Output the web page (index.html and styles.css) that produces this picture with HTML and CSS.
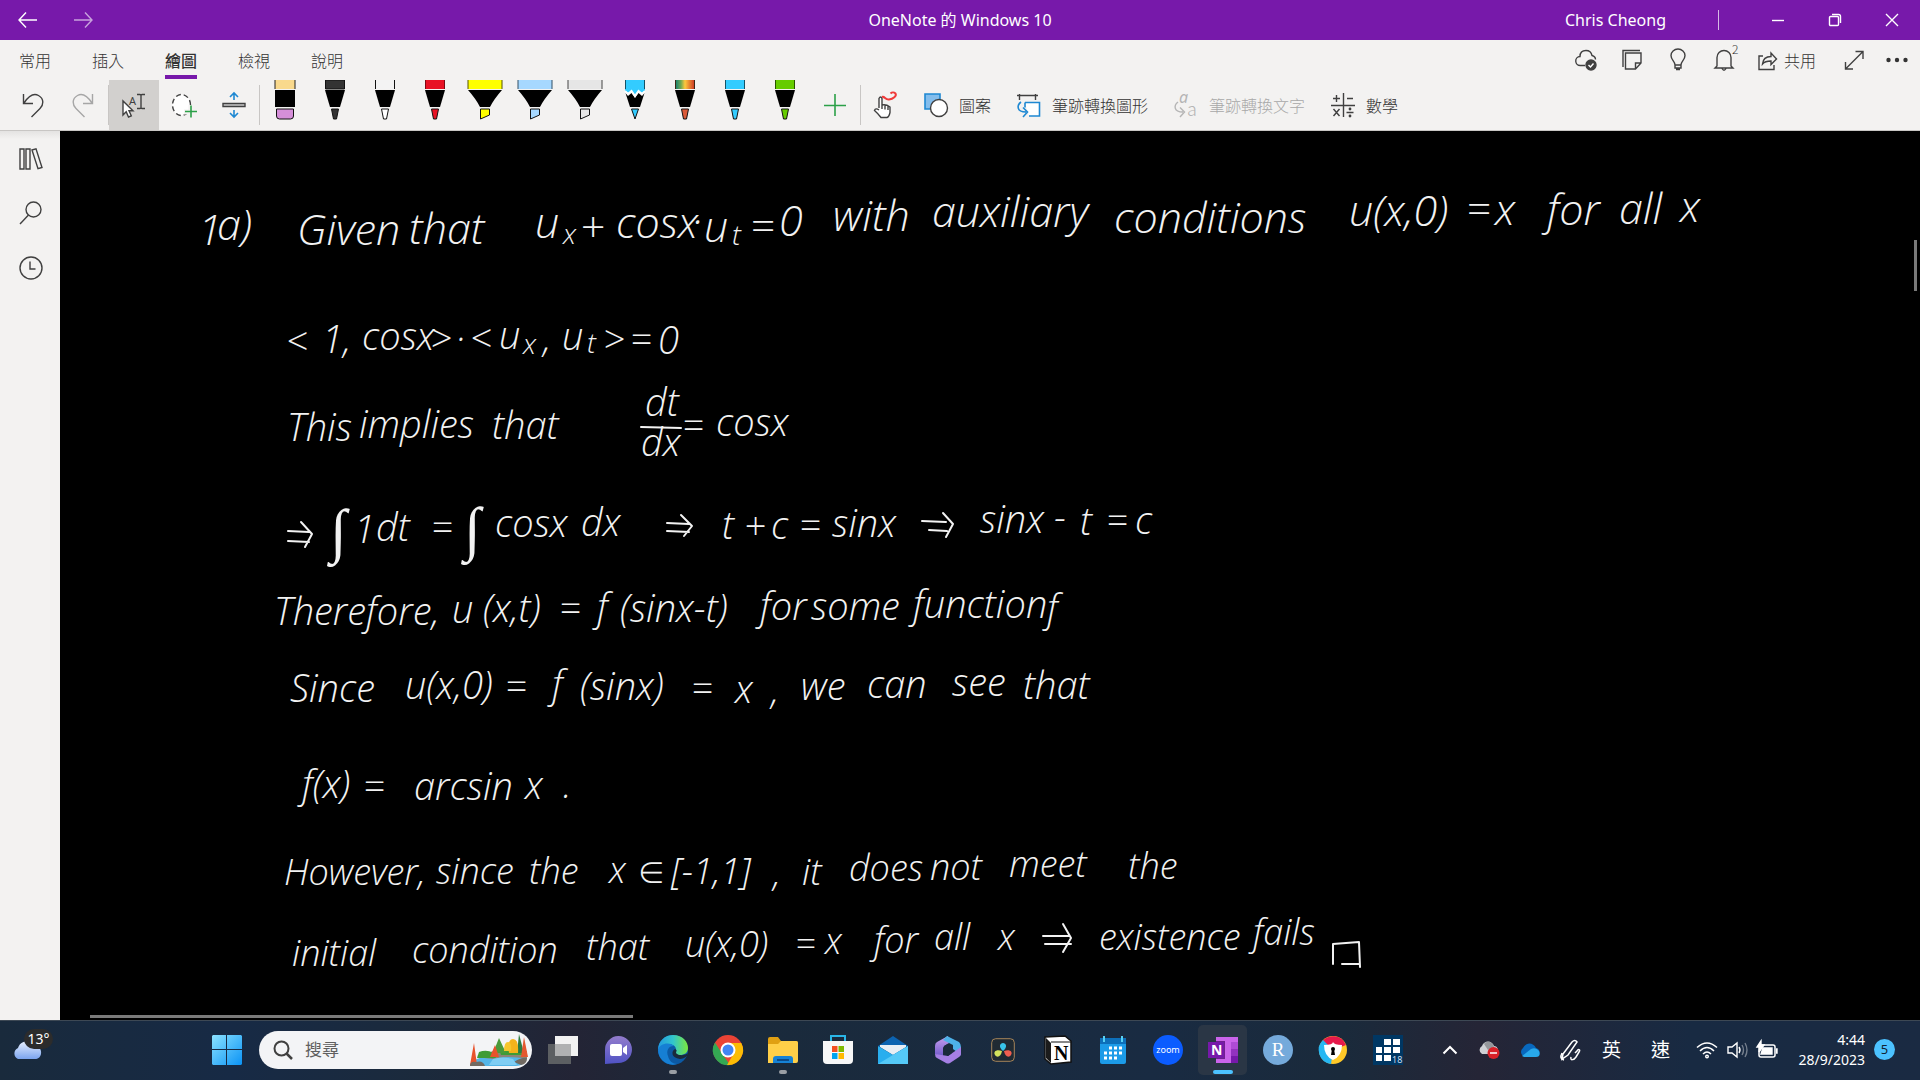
FILE: index.html
```html
<!DOCTYPE html>
<html lang="zh-Hant">
<head>
<meta charset="utf-8">
<title>OneNote 的 Windows 10</title>
<link rel="stylesheet" href="styles.css">
</head>
<body>
<header class="titlebar">
  <div class="titlebar-nav">
    <button class="bare" aria-label="返回"><svg width="20" height="18" viewBox="0 0 20 18" class="line white"><path d="M19 9H1M8 1.500L1 9l7 7.500"/></svg></button>
    <button class="bare" aria-label="前進"><svg width="20" height="18" viewBox="0 0 20 18" class="line white faded"><path d="M1 9h18M12 1.500L19 9l-7 7.500"/></svg></button>
  </div>
  <h1 class="title">OneNote 的 Windows 10</h1>
  <div class="titlebar-end">
    <span class="user">Chris Cheong</span>
    <span class="title-sep"></span>
    <button class="win" aria-label="最小化"><svg width="12" height="12" viewBox="0 0 12 12" class="line white"><path d="M0 6.500h12"/></svg></button>
    <button class="win" aria-label="還原"><svg width="12" height="12" viewBox="0 0 12 12" class="line white"><rect x=".5" y="2.500" width="9" height="9" rx="1"/><path d="M3 .5h6.500q2 0 2 2V9"/></svg></button>
    <button class="win" aria-label="關閉"><svg width="12" height="12" viewBox="0 0 12 12" class="line white"><path d="M0 0l12 12M12 0L0 12"/></svg></button>
  </div>
</header>

<nav class="tabs">
  <button class="tab">常用</button>
  <button class="tab">插入</button>
  <button class="tab active">繪圖</button>
  <button class="tab">檢視</button>
  <button class="tab">說明</button>
  <div class="tab-actions">
    <button class="bare" aria-label="同步"><svg width="24" height="24" viewBox="0 0 24 24" class="line"><path d="M11 17.500H6.500a4.500 4.500 0 0 1-.5-9C6 4 9 2.500 12 2.500c4 0 5.500 2.500 6 5 2 .5 3.500 2 3.500 4"/><circle cx="17" cy="17" r="5" class="solid"/><path d="M14.500 17l2 2 3-3.500" class="knock"/></svg></button>
    <button class="bare" aria-label="便箋"><svg width="24" height="24" viewBox="0 0 24 24" class="line"><path d="M3 19V2.500h17M5.500 5h15.500v10l-5.500 6H5.500zM21 15h-5.500v6"/></svg></button>
    <button class="bare" aria-label="操作說明"><svg width="24" height="24" viewBox="0 0 24 24" class="line"><path d="M9 17c0-4-4-5-4-9.500a7 6.500 0 0 1 14 0c0 4.500-4 5.500-4 9.500zM9 17v3h6v-3M10 21.500h4"/></svg></button>
    <button class="bare bell" aria-label="通知"><svg width="24" height="24" viewBox="0 0 24 24" class="line"><path d="M5 18V9.500a7 7 0 0 1 14 0V18l2 2H3zM10 20.500q2 3.500 4 0"/></svg><sup>2</sup></button>
    <button class="bare share"><svg width="20" height="24" viewBox="0 0 20 24" class="line"><path d="M5 8H1v13.500h15V17M4.500 16c.5-5 3.500-7.500 8.500-7.500V5l5.500 6-5.500 5.500V13c-4 0-6.500.5-8.500 3z"/></svg>共用</button>
    <button class="bare" aria-label="全螢幕"><svg width="20" height="20" viewBox="0 0 20 20" class="line"><path d="M2 18.500L18.500 2M11.500 1.500H19V9M1.500 12v7H9"/></svg></button>
    <button class="bare" aria-label="其他"><svg width="22" height="6" viewBox="0 0 22 6" fill="#333"><circle cx="2.500" cy="3" r="2.200"/><circle cx="11" cy="3" r="2.200"/><circle cx="19.500" cy="3" r="2.200"/></svg></button>
  </div>
</nav>

<div class="toolbar">
  <button class="tool" aria-label="復原"><svg width="24" height="26" viewBox="0 0 24 26" class="line"><path d="M2.500 2v9.500H12M3 11C8 3.500 13 1 17.500 3.500c6 3.500 5 9.500 1.500 13L10.500 25"/></svg></button>
  <button class="tool" aria-label="取消復原"><svg width="24" height="26" viewBox="0 0 24 26" class="line dim"><path d="M21.500 2v9.500H12M21 11C16 3.500 11 1 6.500 3.500c-6 3.500-5 9.500-1.500 13L13.500 25"/></svg></button>
  <span class="sep"></span>
  <button class="tool pressed" aria-label="選取物件或輸入文字"><svg width="26" height="26" viewBox="0 0 26 26" class="line"><path d="M2 9v14l3.200-3.200L7.500 25l2.800-1.200L8 18.800h4z" fill="#fff"/><text x="8" y="13" class="tiny">A</text><path d="M16 2.500h3q1 0 1 1 0-1 1-1h3M20 3v13M16 16.500h3q1 0 1-1 0 1 1 1h3"/></svg></button>
  <button class="tool" aria-label="套索選取"><svg width="26" height="26" viewBox="0 0 26 26" class="line"><ellipse cx="10.500" cy="13" rx="9" ry="10.500" fill="#fff" stroke-dasharray="5 3"/><path d="M13 20h14M20 13v13" stroke="#f3f2f1" stroke-width="5"/><path d="M14 19.500h12M20 13.500v12" class="green"/></svg></button>
  <button class="tool" aria-label="插入空間"><svg width="24" height="26" viewBox="0 0 24 26" class="line"><path d="M1 11.500h22v3H1z" fill="#c8c8c8"/><path d="M12 8V1.500M8 5l4-4 4 4M12 18v6.500M8 21l4 4 4-4" class="blue"/></svg></button>
  <span class="sep"></span>
  <button class="tool pen" aria-label="橡皮擦"><svg width="36" height="40" viewBox="0 0 36 40"><path d="M8 0h20v9H8z" fill="#f9d98c"/><path d="M8 0v9M28 0v9" stroke="#222"/><path d="M8 10h20v17H8z"/><path d="M9.500 29h17v7q0 3-3 3h-11q-3 0-3-3z" fill="#d58fd9" stroke="#111"/></svg></button>
  <button class="tool pen" aria-label="黑色畫筆"><svg width="36" height="40" viewBox="0 0 36 40"><path d="M8.500 0h19v9h-19z" fill="#333" stroke="#111"/><path d="M8 10h20l-5 17H13z"/><path d="M14.500 29h7l-2 10h-3z" fill="#333" stroke="#111"/></svg></button>
  <button class="tool pen" aria-label="白色畫筆"><svg width="36" height="40" viewBox="0 0 36 40"><path d="M8 0h20v9H8z" fill="#f3f3f3"/><path d="M8.500 0v9M27.500 0v9" stroke="#111"/><path d="M8 10h20l-5 17H13z"/><path d="M14.500 29h7l-2 10h-3z" fill="#fff" stroke="#111"/></svg></button>
  <button class="tool pen" aria-label="紅色畫筆"><svg width="36" height="40" viewBox="0 0 36 40"><path d="M8 0h20v9H8z" fill="#e81224"/><path d="M8.500 0v9M27.500 0v9" stroke="#7b0913"/><path d="M8 10h20l-5 17H13z"/><path d="M14.500 29h7l-2 10h-3z" fill="#e81224" stroke="#111"/></svg></button>
  <button class="tool pen" aria-label="黃色螢光筆"><svg width="36" height="40" viewBox="0 0 36 40"><path d="M1 0h34v9H1z" fill="#ff0"/><path d="M1 0v9M35 0v9" stroke="#555500"/><path d="M1 10h34q-8 9-12 17H13Q9 19 1 10z"/><path d="M13.500 29h9v6l-9 4z" fill="#ff0" stroke="#111"/></svg></button>
  <button class="tool pen" aria-label="藍色螢光筆"><svg width="36" height="40" viewBox="0 0 36 40"><path d="M1 0h34v9H1z" fill="#a6d8ff"/><path d="M1 0v9M35 0v9" stroke="#335066"/><path d="M1 10h34q-8 9-12 17H13Q9 19 1 10z"/><path d="M13.500 29h9v6l-9 4z" fill="#a6d8ff" stroke="#111"/></svg></button>
  <button class="tool pen" aria-label="灰色螢光筆"><svg width="36" height="40" viewBox="0 0 36 40"><path d="M1 0h34v9H1z" fill="#e6e6e6"/><path d="M1 0v9M35 0v9" stroke="#444"/><path d="M1 10h34q-8 9-12 17H13Q9 19 1 10z"/><path d="M13.500 29h9v6l-9 4z" fill="#e6e6e6" stroke="#111"/></svg></button>
  <button class="tool pen" aria-label="藍色鉛筆"><svg width="36" height="40" viewBox="0 0 36 40"><path d="M8 0h20v11l-3 3-3.500-3-3.500 4-3.500-4-3.500 3-3-3z" fill="#3cf"/><path d="M8.500 0v9M27.500 0v9" stroke="#145266"/><path d="M8.500 13l2.500 3 3.500-3 3.500 5 3.500-5 3.500 3 2.500-3-4.500 14H13z"/><path d="M8 11l3 3 3.500-3 3.500 5 3.500-5 3.500 3 3-3" fill="none" stroke="#fff" stroke-width="2"/><path d="M14.500 29h7L18 39z" fill="#3cf" stroke="#111"/></svg></button>
  <button class="tool pen" aria-label="彩色畫筆"><svg width="36" height="40" viewBox="0 0 36 40"><defs><linearGradient id="rainbow"><stop offset="0" stop-color="#087a70"/><stop offset=".3" stop-color="#74a952"/><stop offset=".5" stop-color="#ffc83d"/><stop offset="1" stop-color="#c92f22"/></linearGradient></defs><path d="M8 0h20v9H8z" fill="url(#rainbow)"/><path d="M8.500 0v9M27.500 0v9" stroke="#3d2515"/><path d="M8 10h20l-5 17H13z"/><path d="M14.500 29h7l-2 10h-3z" fill="#db5a38" stroke="#111"/></svg></button>
  <button class="tool pen" aria-label="天藍畫筆"><svg width="36" height="40" viewBox="0 0 36 40"><path d="M8 0h20v9H8z" fill="#3cf"/><path d="M8.500 0v9M27.500 0v9" stroke="#145266"/><path d="M8 10h20l-5 17H13z"/><path d="M14.500 29h7l-2 10h-3z" fill="#3cf" stroke="#111"/></svg></button>
  <button class="tool pen" aria-label="綠色畫筆"><svg width="36" height="40" viewBox="0 0 36 40"><path d="M8 0h20v9H8z" fill="#6c0"/><path d="M8.500 0v9M27.500 0v9" stroke="#295200"/><path d="M8 10h20l-5 17H13z"/><path d="M14.500 29h7l-2 10h-3z" fill="#6c0" stroke="#111"/></svg></button>
  <button class="tool" aria-label="新增畫筆"><svg width="22" height="22" viewBox="0 0 22 22" class="line"><path d="M0 11.500h22M11 0v22" class="green"/></svg></button>
  <span class="sep"></span>
  <button class="tool" aria-label="使用手指繪圖"><svg width="26" height="28" viewBox="0 0 26 28" class="line"><path d="M6 17V7.500q1.500-3 3 0V14q4-1 8 2v5.500q-1 4.500-3 5H8q-3-4-6.500-7 1-3 4.500-.5M9 14v4M12 14.500v4M15 15.500v3.500" fill="#fff"/><path d="M9 6c3-1 3 3 7 2.500C20 8 24 5 22.500 2.500 21 1 19 1 17.500 2.500" stroke="#f03a3a" stroke-width="2"/></svg></button>
  <button class="tool-text"><svg width="24" height="26" viewBox="0 0 24 26" class="line"><path d="M1 2h15v15H1z" fill="#83bdec" class="blue"/><circle cx="15" cy="16" r="8.500" fill="#fff"/></svg>圖案</button>
  <button class="tool-text"><svg width="24" height="26" viewBox="0 0 24 26" class="line"><path d="M2.500 2v6M18.500 2v6M0 3.500h21"/><path d="M8 10.500h14.500V24H12M8 10.500v5" class="blue" fill="#fff"/><path d="M4 10C0 13-1 20 9 20M6 15.500l4.500 4.500L6 25" class="blue"/></svg>筆跡轉換圖形</button>
  <button class="tool-text" disabled><svg width="24" height="26" viewBox="0 0 24 26" class="line pale"><text x="5" y="11" class="ital">a</text><text x="13" y="24" class="big">a</text><path d="M4 10C0 13-1 20 9 20M6 15.500l4.500 4.500L6 25"/></svg>筆跡轉換文字</button>
  <button class="tool-text"><svg width="24" height="26" viewBox="0 0 24 26" class="line"><path d="M12.500 1v24M0 13.500h24M2 6.500h7M5.500 3v7M16 6.500h6M2.500 17l6 7M8.500 17l-6 7M15.500 20.500h7"/><circle cx="19" cy="17" r=".7"/><circle cx="19" cy="24" r=".7"/></svg>數學</button>
</div>

<div class="workspace">
  <aside class="rail">
    <button class="bare" aria-label="筆記本"><svg width="24" height="22" viewBox="0 0 24 22" class="line"><path d="M1 1h4v20H1zM7 1h4v20H7zM13 2l4-1.200L23 19.500l-4 1.200z"/></svg></button>
    <button class="bare" aria-label="搜尋"><svg width="24" height="24" viewBox="0 0 24 24" class="line"><circle cx="14.500" cy="8.500" r="7.500"/><path d="M9.500 14L1 23"/></svg></button>
    <button class="bare" aria-label="最近使用"><svg width="24" height="24" viewBox="0 0 24 24" class="line"><circle cx="12" cy="12" r="11"/><path d="M11 5.500V13h5.500"/></svg></button>
  </aside>
  <main class="canvas">
    <svg class="ink" width="1860" height="889" viewBox="60 131 1860 889">
      <g class="large">
        <text x="198" y="245">1</text><text x="217" y="240">a)</text><text x="297" y="245">Given</text><text x="409" y="244">that</text>
        <text x="535" y="238">u</text><text x="563" y="244" class="sub">x</text><text x="580" y="242">+</text><text x="616" y="238">cosx</text><text x="692" y="236">·</text>
        <text x="704" y="242">u</text><text x="732" y="245" class="sub">t</text><text x="750" y="241">=</text><text x="779" y="236">0</text>
        <text x="833" y="231">with</text><text x="932" y="227">auxiliary</text><text x="1114" y="233">conditions</text>
        <text x="1349" y="226">u(x,0)</text><text x="1466" y="224">=</text><text x="1495" y="225">x</text><text x="1547" y="225">for</text><text x="1619" y="224">all</text><text x="1680" y="222">x</text>
      </g>
      <g>
        <text x="286" y="355">&lt;</text><text x="322" y="353">1,</text><text x="362" y="350">cosx</text><text x="430" y="352">&gt;</text><text x="456" y="352">·</text><text x="470" y="352">&lt;</text>
        <text x="499" y="349">u</text><text x="523" y="354" class="sub">x</text><text x="543" y="352">,</text><text x="562" y="350">u</text><text x="587" y="353" class="sub">t</text><text x="603" y="353">&gt;</text><text x="630" y="353">=</text><text x="658" y="354">0</text>
      </g>
      <g>
        <text x="287" y="441">This</text><text x="359" y="438">implies</text><text x="492" y="439">that</text>
        <text x="645" y="416">dt</text><path d="M641 427l40 1"/><text x="641" y="456">dx</text><text x="682" y="439">=</text><text x="716" y="436">cosx</text>
      </g>
      <g>
        <path d="M288 531l21 1M288 541l21 1M301 522l11 12-7 13"/><text x="330" y="551" class="integral">∫</text><text x="354" y="543">1</text><text x="376" y="541">dt</text><text x="431" y="541">=</text><text x="464" y="549" class="integral">∫</text>
        <text x="495" y="537">cosx</text><text x="581" y="536">dx</text><path d="M667 523l22 1M667 531l22 1M681 515l11 11-8 10"/>
        <text x="722" y="539">t</text><text x="744" y="540">+</text><text x="771" y="539">c</text><text x="799" y="539">=</text><text x="832" y="537">sinx</text><path d="M922 521l24 1M929 530l18 1M943 513l10 11-7 13"/>
        <text x="980" y="533">sinx</text><text x="1054" y="531">-</text><text x="1080" y="535">t</text><text x="1106" y="534">=</text><text x="1135" y="534">c</text>
      </g>
      <g>
        <text x="274" y="625">Therefore,</text><text x="452" y="623">u</text><text x="483" y="622">(x,t)</text><text x="559" y="622">=</text><text x="597" y="621">f</text><text x="620" y="622">(sinx-t)</text>
        <text x="760" y="620">for</text><text x="811" y="620">some</text><text x="913" y="618">function</text><text x="1047" y="622">f</text>
      </g>
      <g>
        <text x="290" y="702">Since</text><text x="405" y="699">u(x,0)</text><text x="505" y="700">=</text><text x="552" y="698">f</text><text x="580" y="700">(sinx)</text><text x="691" y="702">=</text><text x="735" y="703">x</text><text x="771" y="704">,</text>
        <text x="801" y="700">we</text><text x="867" y="698">can</text><text x="952" y="696">see</text><text x="1023" y="699">that</text>
      </g>
      <g>
        <text x="302" y="798">f(x)</text><text x="363" y="800">=</text><text x="414" y="800">arcsin</text><text x="525" y="799">x</text><text x="563" y="798">.</text>
      </g>
      <g class="small">
        <text x="284" y="885">However,</text><text x="436" y="884">since</text><text x="529" y="884">the</text><text x="609" y="883">x</text><text x="637" y="883" class="element">∈</text><text x="671" y="884">[-1,1]</text><text x="773" y="886">,</text><text x="802" y="885">it</text>
        <text x="849" y="881">does</text><text x="930" y="880">not</text><text x="1009" y="877">meet</text><text x="1128" y="879">the</text>
      </g>
      <g class="small">
        <text x="292" y="966">initial</text><text x="412" y="963">condition</text><text x="586" y="960">that</text><text x="685" y="957">u(x,0)</text><text x="795" y="957">=</text><text x="825" y="954">x</text><text x="874" y="953">for</text><text x="934" y="950">all</text><text x="998" y="950">x</text>
        <path d="M1043 936h26M1045 944h26M1063 924l8 14-8 14"/><text x="1099" y="950">existence</text><text x="1253" y="945">fails</text><path d="M1333 964v-20l26-2 1 25M1342 964h17"/>
      </g>
    </svg>
    <span class="scroll-x"></span>
    <span class="scroll-y"></span>
  </main>
</div>

<footer class="taskbar">
  <button class="bare weather" aria-label="天氣"><svg width="32" height="20" viewBox="0 0 32 20"><defs><linearGradient id="cloud" x2="0" y2="1"><stop offset="0" stop-color="#e6efff"/><stop offset="1" stop-color="#7ba4ee"/></linearGradient></defs><path d="M7 19a6 6 0 0 1 0-11C9 1 17-1 20 6c7-1 11 3 10 8-.5 3-3 5-6 5z" fill="url(#cloud)"/></svg><span class="temp">13°</span></button>
  <div class="apps">
    <button class="app" aria-label="開始"><svg width="30" height="30" viewBox="0 0 30 30"><defs><linearGradient id="win" gradientUnits="userSpaceOnUse" x1="0" y1="0" x2="30" y2="30"><stop offset="0" stop-color="#8be2ff"/><stop offset="1" stop-color="#0b93f5"/></linearGradient></defs><path d="M1 0h13v14H0V1zM15 0h14l1 1v13H15zM0 15h14v15H1l-1-1zM15 15h15v14l-1 1H15z" fill="url(#win)"/></svg></button>
    <label class="search"><svg width="20" height="20" viewBox="0 0 20 20" class="line"><circle cx="8.500" cy="8.500" r="7" stroke-width="2"/><path d="M13.500 13.500L19 19" stroke-width="2.500"/></svg><input type="search" placeholder="搜尋" aria-label="搜尋">
      <svg width="60" height="34" viewBox="0 0 60 34"><path d="M3 28q25-12 55-2-3 7-11 7H6z" fill="#55b6e8"/><path d="M8 23q22-9 50-5v8q-20-4-34 0-8 0-16-3z" fill="#8c8578"/><path d="M10 19q8-3 14 1l3 5H8zM30 16h24v6H32z" fill="#3f9c35"/><path d="M24 20l6-15 7 15z" fill="#4b9a3a"/><path d="M48 20l2-19 5 19z" fill="#2b7a42"/><path d="M40 20q-2-14 4-14t5 14z" fill="#f4b31b"/><path d="M35 18q0-9 4-9t3 9z" fill="#f6c62c"/><path d="M1 32l4-22 3 22zM21 24l5-12 4 12z" fill="#e8532c"/><path d="M52 24l3-20 4 20z" fill="#e4572e"/><path d="M1 33q0-5 6-4 7-2 9 4zM45 29q8-5 13-4 0 6-6 7z" fill="#716a62"/><path d="M24 26q10-3 20 0l4 6H20z" fill="#7fcdf3"/></svg></label>
    <button class="app" aria-label="工作檢視"><svg width="30" height="28" viewBox="0 0 30 28"><path d="M0 8h23v20H0z" fill="#5c5f62"/><path d="M7 0h23v20H7z" fill="#f2f2f2"/><path d="M7 8h16v12H7z" fill="#b0b1b2"/></svg></button>
    <button class="app" aria-label="聊天"><svg width="28" height="28" viewBox="0 0 28 28"><defs><linearGradient id="chat" x2="0" y2="1"><stop offset="0" stop-color="#937ccc"/><stop offset="1" stop-color="#4f52c4"/></linearGradient></defs><path d="M1 28V14a13.500 13.500 0 1 1 13 13z" fill="url(#chat)"/><rect x="6" y="8" width="12" height="12" rx="2" fill="#fff"/><path d="M19 12l4-3v10l-4-3z" fill="#fff"/></svg></button>
    <button class="app running" aria-label="Edge"><svg width="30" height="30" viewBox="0 0 30 30"><defs><linearGradient id="edge"><stop offset="0" stop-color="#2299e0"/><stop offset=".5" stop-color="#32c5cc"/><stop offset="1" stop-color="#7be83c"/></linearGradient></defs><circle cx="15" cy="15" r="15" fill="#0c59a4"/><path d="M0 15C0 6 7 0 15 0c10 0 15 7 15 13 0 5-4 7-8 7-5 0-6-2-4-4 1-5-5-8-10-6-4 1-7 3-8 5z" fill="url(#edge)"/><path d="M0 15c1-6 11-9 16-4-6 0-8 5-6 10 1 5 5 8 9 8C9 32 0 24 0 15z" fill="#167fd4"/><path d="M17 14c-4 2-4 9 5 10 2 0 5-1 7-3l1-3c-3 3-12 3-12-1 1-1 1-2-1-3z" fill="#1a2a3c"/></svg></button>
    <button class="app" aria-label="Chrome"><svg width="30" height="30" viewBox="0 0 30 30"><circle cx="15" cy="15" r="15" fill="#ea4335"/><path d="M2 7.500l7 11L17 30A15 15 0 0 1 2 7.500z" fill="#34a853"/><path d="M15 8h13.300A15 15 0 0 1 14 30l7-12z" fill="#fbbc05"/><circle cx="15" cy="15" r="7.500" fill="#fff"/><circle cx="15" cy="15" r="5.500" fill="#4285f4"/></svg></button>
    <button class="app running" aria-label="檔案總管"><svg width="30" height="26" viewBox="0 0 30 26"><path d="M0 2q0-2 2-2h8l3 4h15q2 0 2 2v8H0z" fill="#e0a013"/><path d="M0 7h10l3-3h15q2 0 2 2v18q0 2-2 2H0z" fill="#ffcf48"/><path d="M5 26v-4q0-3 3-3h14q3 0 3 3v4z" fill="#1682d5"/><path d="M9 22h12v2H9z" fill="#0b4b8a"/></svg></button>
    <button class="app" aria-label="Microsoft Store"><svg width="30" height="30" viewBox="0 0 30 30"><path d="M8 7V1h14v6" fill="none" stroke="#29b6e8" stroke-width="2"/><path d="M0 6h30v19q0 4-4 4H4q-4 0-4-4z" fill="#f7f7f7"/><path d="M9 11h5.500v6H9z" fill="#f25022"/><path d="M15.500 11H21v6h-5.500z" fill="#7fba00"/><path d="M9 18h5.500v6H9z" fill="#00a4ef"/><path d="M15.500 18H21v6h-5.500z" fill="#ffb900"/></svg></button>
    <button class="app" aria-label="郵件"><svg width="30" height="28" viewBox="0 0 30 28"><path d="M0 10L15 0l15 10-15 9z" fill="#0c63b0"/><path d="M2 9h26v2l-13 8L2 11z" fill="#e8eef4"/><path d="M0 10l15 9 15-9v18H0z" fill="#29aeee"/><path d="M0 28l30-18v18z" fill="#55c9f7"/></svg></button>
    <button class="app" aria-label="Microsoft 365"><svg width="26" height="28" viewBox="0 0 26 28"><defs><linearGradient id="m365" x2="0" y2="1"><stop offset="0" stop-color="#c9a0f0"/><stop offset="1" stop-color="#6a55c8"/></linearGradient></defs><path d="M13 0L2 6q-2 1-2 4v8l8 4V12q0-2 6-5z" fill="url(#m365)"/><path d="M12 0l12 6q2 2 2 5v8l-8-6V9L8 4z" fill="#4db1e8"/><path d="M0 18l13 2 13-9v7q0 2-2 3l-9 6q-2 1-4 0l-9-5q-2-1-2-4z" fill="#a57fe4"/><path d="M9 10l4-2 4 2v7l-4 3-4-3z" fill="#1a2a3c"/></svg></button>
    <button class="app" aria-label="DaVinci Resolve"><svg width="24" height="24" viewBox="0 0 24 24"><rect x=".7" y=".7" width="22.600" height="22.600" rx="4" fill="#202a33" stroke="#a58459"/><path d="M12 13c-5-4-3-8 0-8s5 4 0 8z" fill="#38c4ea"/><path d="M11 13c-1 6-5 7-7 4s1-6 7-4z" fill="#d3e35d"/><path d="M13 13c1 6 5 7 7 4s-1-6-7-4z" fill="#f15e50"/></svg></button>
    <button class="app" aria-label="Notion"><svg width="28" height="28" viewBox="0 0 28 28"><path d="M1 1l20-1 6 5v21l-20 2-6-5z" fill="#fff" stroke="#111" stroke-width="1.500"/><path d="M2 2l5 5v20l-5-5z" fill="#1b1b1b"/><path d="M7 6h20" stroke="#111"/><text x="10" y="24" class="notion">N</text></svg></button>
    <button class="app" aria-label="行事曆"><svg width="26" height="28" viewBox="0 0 26 28"><path d="M0 2h26v24q0 2-2 2H2q-2 0-2-2z" fill="#1c9be8"/><path d="M0 2h26v6H0z" fill="#0d6fb9"/><path d="M4 0v6M22 0v6" stroke="#57d1f5" stroke-width="2"/><path d="M9 12h3M14 12h3M19 12h3M4 17h3M9 17h3M14 17h3M19 17h3M4 22h3M9 22h3M14 22h3" stroke="#fff" stroke-width="3"/></svg></button>
    <button class="app" aria-label="Zoom"><svg width="30" height="30" viewBox="0 0 30 30"><circle cx="15" cy="15" r="15" fill="#0b5cff"/><text x="15" y="18" class="zoom">zoom</text></svg></button>
    <button class="app current" aria-label="OneNote"><svg width="30" height="26" viewBox="0 0 30 26"><path d="M8 0h22v26H8z" fill="#ca64ea"/><path d="M23 5h7v7h-7z" fill="#ae4bd5"/><path d="M23 12h7v7h-7z" fill="#9332bf"/><path d="M23 19h7v7h-7z" fill="#7719aa"/><path d="M8 4h9v18H8z" fill="#702090"/><path d="M0 5h16v16H0z" fill="#7719aa"/><text x="3" y="18" class="note">N</text></svg></button>
    <button class="app" aria-label="RStudio"><svg width="30" height="30" viewBox="0 0 30 30"><circle cx="15" cy="15" r="15" fill="#75aadb"/><text x="15" y="21" class="rstudio">R</text></svg></button>
    <button class="app" aria-label="AVG"><svg width="28" height="28" viewBox="0 0 28 28"><circle cx="14" cy="14" r="14" fill="#ffc928"/><path d="M14 14L2 7a14 14 0 0 1 25 2z" fill="#e6194b"/><path d="M14 14L4 4a14 14 0 0 0 8 24z" fill="#26b7f3"/><path d="M5 9q9 0 9-3 1 3 9 3 0 11-9 15-9-4-9-15z" fill="#fff"/><circle cx="14" cy="13" r="2"/><path d="M13 13h2l1 6h-4z"/></svg></button>
    <button class="app" aria-label="App 18"><svg width="30" height="30" viewBox="0 0 30 30"><path d="M0 0h30v30H0z" fill="#003763"/><path d="M11 4h7v6h-7zM20 4h7v6h-7zM3 12h6v6H3zM11 12h7v6h-7zM20 12h7v6h-7zM3 20h6v6H3zM11 20h7v6h-7z" fill="#fff"/><text x="19" y="28" class="eighteen">18</text></svg></button>
  </div>
  <div class="tray">
    <button class="bare" aria-label="隱藏的圖示"><svg width="16" height="10" viewBox="0 0 16 10" class="line white"><path d="M1.500 8.500L8 2l6.500 6.500" stroke-width="2"/></svg></button>
    <button class="bare" aria-label="同步錯誤"><svg width="22" height="18" viewBox="0 0 22 18"><path d="M4 13a4.500 4.500 0 0 1 0-8C6-1 14-1 16 5c3 0 5 3 4 8z" fill="#cfd1d5"/><path d="M6 3c3-4 9-2 10 3l-6 3z" fill="#94979b"/><circle cx="15.500" cy="12" r="6" fill="#da2128"/><path d="M12 12h7" stroke="#fff" stroke-width="1.500"/></svg></button>
    <button class="bare" aria-label="OneDrive"><svg width="20" height="14" viewBox="0 0 20 14"><path d="M3 13a5 5 0 0 1 0-8C6-1 13-1 16 5c4 1 5 6 2 8z" fill="#0868bd"/><path d="M2 13l9-7q5-2 8 2 2 6-3 6H4z" fill="#28a8ea"/></svg></button>
    <button class="bare" aria-label="手寫筆"><svg width="22" height="22" viewBox="0 0 22 22" class="line white"><path d="M3 15l9-12q3-3 5 0l-9 13-6 4zM2 14q-3 6 2 7M11 18c-1 4 3 3 5 0l3-5c2-3-1-3-2-1l-2 2" stroke-width="1.500"/></svg></button>
    <button class="bare ime">英</button>
    <button class="bare ime">速</button>
    <button class="bare system" aria-label="網路、音量、電池">
      <svg width="22" height="18" viewBox="0 0 22 18" class="line white"><path d="M1 6.500q10-9 20 0M4 10q7-7 14 0M7 13q4-4 8 0" stroke-width="1.500"/><circle cx="11" cy="15.500" r="1.300"/></svg>
      <svg width="20" height="18" viewBox="0 0 20 18" class="line white"><path d="M1 6h4l5-4v14l-5-4H1zM12 6q2 3 0 6"/><path d="M15 4q3 5 0 10M18 2q4 7 0 14" opacity=".4"/></svg>
      <svg width="22" height="18" viewBox="0 0 22 18" class="line white"><rect x="3" y="4" width="16" height="12" rx="2" stroke-width="1.500"/><path d="M7 7h9v6H5z" fill="#fff"/><path d="M20 8h1v4h-1M5 0L1 6h3l-1 5 5-7H5z" fill="#fff"/></svg>
    </button>
    <button class="bare clock"><span>4:44</span><span>28/9/2023</span></button>
    <span class="count">5</span>
  </div>
</footer>
</body>
</html>
```
FILE: styles.css
```css
* { box-sizing: border-box; }

body {
  margin: 0;
  height: 100vh;
  display: flex;
  flex-direction: column;
  overflow: hidden;
  background: #000;
  color: #333;
  font: 16px/20px "Noto Sans", "Noto Sans CJK TC", sans-serif;
}

button, input { font: inherit; color: inherit; }

button {
  display: flex;
  align-items: center;
  justify-content: center;
  padding: 0;
  border: 0;
  background: none;
}

svg { display: block; flex: none; overflow: visible; }

.line { fill: none; stroke: #404040; stroke-width: 1.4; }
.line text { fill: #404040; stroke: none; }
.line.white { stroke: #fff; }
.line.faded { opacity: .6; }
.line.dim { stroke: #a6a6a6; }
.line.pale { stroke: #b5b5b5; }
.line.pale text { fill: #b5b5b5; }
.line .solid { fill: #404040; }
.line .knock { stroke: #fff; }
.line .green { stroke: #2ba048; stroke-width: 1.6; }
.line .blue { stroke: #1e88d2; stroke-width: 1.6; }
.tiny { font-size: 11px; }
.ital { font: italic 16px "Noto Sans", sans-serif; }
.big { font-size: 18px; }

/* Title bar */
.titlebar {
  display: grid;
  grid-template-columns: 1fr auto 1fr;
  align-items: center;
  height: 40px;
  flex: none;
  background: #7719aa;
  color: #fff;
}
.titlebar-nav { display: flex; gap: 35px; padding-left: 18px; }
.title { margin: 0; font-size: 16px; font-weight: 400; }
.titlebar-end { display: flex; align-items: center; justify-content: flex-end; }
.title-sep { width: 1px; height: 20px; margin: 0 30px 0 52px; background: #d6bae5; }
.win { width: 57px; height: 38px; }

/* Tabs */
.tabs {
  display: flex;
  height: 40px;
  flex: none;
  padding-left: 19px;
  gap: 41px;
  background: #f3f2f1;
  font-family: "Noto Sans CJK TC", sans-serif;
  font-weight: 300;
}
.tab { width: 32px; height: 39px; border-bottom: 4px solid transparent; border-top: 4px solid transparent; white-space: nowrap; }
.tab.active { font-weight: 500; border-bottom-color: #7719aa; }
.tab-actions { display: flex; align-items: center; margin-left: auto; padding-right: 12px; gap: 22px; }
.bell { position: relative; }
.bell sup { position: absolute; left: 20px; top: -5px; font-size: 12px; line-height: 12px; }
.share { gap: 6px; padding-right: 6px; }

/* Drawing tools */
.toolbar {
  display: flex;
  align-items: center;
  height: 51px;
  flex: none;
  padding-left: 8px;
  background: #f3f2f1;
  border-bottom: 1px solid #c8c6c4;
}
.tool { width: 50px; height: 50px; flex: none; }
.tool.pressed { background: #d2d0ce; }
.tool.pen { align-items: flex-start; }
.pen svg { overflow: hidden; }
.sep { width: 1px; height: 40px; flex: none; background: #c8c6c4; }
.tool-text { gap: 11px; height: 50px; padding: 0 13px; white-space: nowrap; font-family: "Noto Sans CJK TC", sans-serif; font-weight: 300; }
.tool-text:disabled { color: #a8a8a8; }

/* Page */
.workspace { display: flex; flex: 1; min-height: 0; }
.rail {
  display: flex;
  flex-direction: column;
  align-items: center;
  width: 60px;
  flex: none;
  padding: 17px 0 0 1px;
  gap: 31px;
  background: linear-gradient(#e4e3e2, #f3f2f1 8px);
}
.canvas { position: relative; flex: 1; overflow: hidden; background: #000; }
.ink { fill: none; stroke: #f2f2f2; stroke-width: 2; stroke-linecap: round; stroke-linejoin: round; }
.ink text { fill: #f2f2f2; stroke: none; font: italic 300 38px "Open Sans", "DejaVu Sans", sans-serif; }
.ink .large text { font-size: 43px; }
.ink .small text { font-size: 36px; }
.ink text.sub, .ink .large text.sub { font-size: 28px; }
.ink text.integral { font: italic 60px "Liberation Serif", serif; }
.ink .small text.element { font: 36px "Liberation Serif", serif; }
.scroll-x { position: absolute; left: 30px; bottom: 2px; width: 543px; height: 3px; background: #7a7a7a; }
.scroll-y { position: absolute; right: 3px; top: 109px; width: 3px; height: 51px; background: #7a7a7a; }

/* Taskbar */
.taskbar {
  display: flex;
  align-items: center;
  height: 60px;
  flex: none;
  padding-bottom: 2px;
  border-top: 1px solid #3d4854;
  background: linear-gradient(90deg, #192a3c, #172a45 12%, #1b2a3c 22%, #232435 30%, #1a2a3b 38%, #192b42 60%, #1a2a3b 70%, #252536 77%, #182a42 88%, #1a2a42);
  color: #fff;
}
.weather { position: relative; width: 60px; height: 56px; padding: 0 4px 0 0; }
.weather svg { margin-left: -2px; }
.temp { position: absolute; left: 24px; top: 7px; width: 29px; height: 20px; border-radius: 10px; background: #2c2c2c; font-size: 14px; }
.apps { display: flex; align-items: center; margin-left: 139px; }
.app { position: relative; width: 49px; height: 50px; margin: 0 3px; border-radius: 5px; }
.app.current { background: #2a3645; }
.app.running::after, .app.current::after {
  content: "";
  position: absolute;
  bottom: 1px;
  width: 8px;
  height: 4px;
  border-radius: 2px;
  background: #9a9fa5;
}
.app.current::after { width: 20px; background: #4cc2ff; }
.search {
  display: flex;
  align-items: center;
  width: 273px;
  height: 38px;
  margin: 0 3px 0 5px;
  padding: 0 3px 0 14px;
  gap: 10px;
  border-radius: 19px;
  background: #f3f4f6;
}
.search input { flex: 1; min-width: 0; padding: 0 0 0 2px; border: 0; outline: 0; background: none; font-size: 17px; }
.search input::placeholder { color: #606060; opacity: 1; }
.tray { display: flex; align-items: center; margin-left: auto; padding-right: 25px; gap: 20px; }
.ime { width: 20px; margin-right: 9px; font-size: 19px; }
.system { gap: 9px; margin-left: -4px; }
.clock { flex-direction: column; align-items: flex-end; margin-left: 1px; font-size: 14px; }
.count { width: 21px; height: 21px; margin-left: -11px; border-radius: 50%; background: #4cc2ff; color: #123; font-size: 13px; text-align: center; }
.notion { font: 700 20px "Liberation Serif", serif; }
.zoom { font: 9px "Noto Sans", sans-serif; fill: #fff; text-anchor: middle; }
.note { font: 700 14px "Noto Sans", sans-serif; fill: #fff; }
.rstudio { font: 19px "Liberation Serif", serif; fill: #fff; text-anchor: middle; }
.eighteen { font: 9px "Noto Sans", sans-serif; fill: #cde; }
```
